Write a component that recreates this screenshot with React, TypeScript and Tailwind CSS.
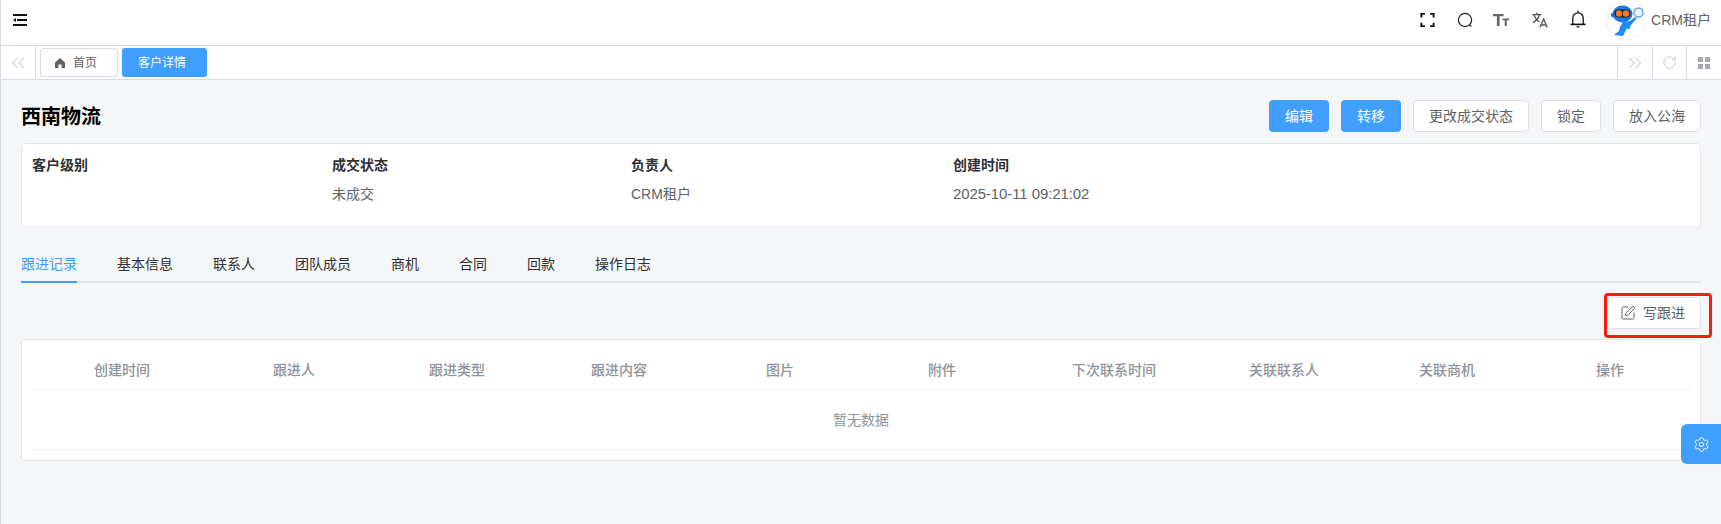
import { ChevronsLeft, ChevronsRight, RotateCw, Settings, SquarePen } from "lucide-react";

const font = "font-['Liberation_Sans','Noto_Sans_CJK_SC',sans-serif]";

const tabs = [
  { label: "跟进记录", active: true },
  { label: "基本信息" },
  { label: "联系人" },
  { label: "团队成员" },
  { label: "商机" },
  { label: "合同" },
  { label: "回款" },
  { label: "操作日志" },
];

const columns = ["创建时间", "跟进人", "跟进类型", "跟进内容", "图片", "附件", "下次联系时间", "关联联系人", "关联商机", "操作"];

function Avatar() {
  return (
    <svg viewBox="0 0 40 40" className="h-10 w-10">
      <circle cx="20" cy="20" r="19.5" fill="#ffffff" stroke="#f2f2f2" />
      <circle cx="32.5" cy="12.5" r="4.5" fill="#eef6fe" stroke="#5aa5ee" strokeWidth="1.3" />
      <path d="M17 22 L24 21 L29 17 L30.5 18.5 L25 25 L23 30 L21 28 L17 36 L8 35 L13 31 L14 27 Z" fill="#1f8cf0" />
      <circle cx="7" cy="15" r="2.2" fill="#1a73de" />
      <ellipse cx="16.5" cy="14" rx="10" ry="8.5" fill="#1a78e2" />
      <rect x="8.5" y="9.5" width="16" height="8" rx="4" fill="#1c2430" />
      <circle cx="13" cy="13.5" r="3.2" fill="#f07a1c" />
      <circle cx="20" cy="13.5" r="3.2" fill="#f07a1c" />
    </svg>
  );
}

export default function App() {
  return (
    <div className={`${font} relative h-[524px] w-[1721px] overflow-hidden border-l border-[#d8dce5] bg-[#f5f6f8] text-sm text-[#606266]`}>
      {/* Top Nav */}
      <div className="flex h-[46px] items-center border-b border-[#d8dce5] bg-white pb-[5px] pl-[12px] pr-[10px]">
        <svg viewBox="0 0 14 12" className="h-3 w-[14px] text-[#111]" fill="currentColor">
          <rect x="0" y="0" width="14" height="2" />
          <rect x="4" y="5" width="10" height="2" />
          <path d="M0 6 L3 4 L3 8 Z" />
          <rect x="0" y="10" width="14" height="2" />
        </svg>
        <div className="ml-auto flex items-center">
          <svg viewBox="0 0 16 16" className="h-[14px] w-[15px] text-[#111]" fill="none" stroke="currentColor" strokeWidth="2.2">
            <path d="M1 5V1h4M11 1h4v4M15 11v4h-4M5 15H1v-4" />
          </svg>
          <svg viewBox="0 0 16 16" className="ml-[22px] h-4 w-4 text-[#222]" fill="none" stroke="currentColor" strokeWidth="1.2">
            <circle cx="8" cy="8" r="6.6" />
            <path d="M12.6 12.8l1.8 1.8" />
          </svg>
          <svg viewBox="0 0 16 12" className="ml-5 h-3 w-4 text-[#666]" fill="currentColor">
            <path d="M0 0h10.5v2.2H6.6V12H3.9V2.2H0z" />
            <path d="M9.5 4.5H16v1.7h-2.2V12h-2.1V6.2H9.5z" />
          </svg>
          <svg viewBox="0 0 16 16" className="ml-[23px] h-4 w-4 text-[#555]" fill="none" stroke="currentColor" strokeWidth="1.3">
            <path d="M0.5 2.6h9M5 0.5v2.1M7.6 2.8C6.6 6 4 9 0.8 10.6M2 2.8C3 6 5 8.6 7.6 10" />
            <path d="M8 15.6L11.6 7l3.6 8.6M9.3 13h4.6" />
          </svg>
          <svg viewBox="0 0 16 18" className="-mt-[3px] ml-[22px] h-[18px] w-4 text-[#111]" fill="none" stroke="currentColor" strokeWidth="1.3">
            <path d="M8 0.5v2M2.8 14V8a5.2 5.2 0 0 1 10.4 0v6" />
            <path d="M0.5 14.4h15" strokeWidth="1.6" />
            <path d="M6.6 16.8h2.8" />
          </svg>
          <span className="ml-5"><Avatar /></span>
          <span className="ml-[5px] text-sm text-[#606266]">CRM租户</span>
        </div>
      </div>

      {/* Tags Bar */}
      <div className="flex h-[34px] items-stretch border-b border-[#d8dce5] bg-white">
        <div className="flex w-[35px] items-center justify-center border-r border-[#d8dce5] text-[#b4b4b4]">
          <ChevronsLeft className="h-[22px] w-[22px]" strokeWidth={1} />
        </div>
        <div className="flex items-center gap-1 pl-[4px]">
          <div className="flex h-[29px] w-[78px] items-center gap-2 rounded-[3px] border border-[#d8dce5] pl-[14px] text-xs text-[#606266]">
            <svg viewBox="0 0 10 10" className="h-[10px] w-[10px]" fill="#606266">
              <path d="M5 0 L10 4.6 V10 H6.6 V6.6 H3.4 V10 H0 V4.6 Z" />
            </svg>
            首页
          </div>
          <div className="flex h-[29px] w-[85px] items-center rounded-[3px] bg-[#409eff] pl-4 text-xs text-white">客户详情</div>
        </div>
        <div className="ml-auto flex">
          <div className="flex w-[35px] items-center justify-center border-l border-[#d8dce5] text-[#b4b4b4]">
            <ChevronsRight className="h-[22px] w-[22px]" strokeWidth={1} />
          </div>
          <div className="flex w-[34px] items-center justify-center border-l border-[#d8dce5] text-[#b4b4b4]">
            <RotateCw className="h-[15px] w-[15px]" strokeWidth={1.2} />
          </div>
          <div className="flex w-[35px] items-center justify-center border-l border-[#d8dce5]">
            <div className="grid grid-cols-2 gap-[2px]">
              <span className="h-[5px] w-[5px] bg-[#a5a8ae]" />
              <span className="h-[5px] w-[5px] bg-[#a5a8ae]" />
              <span className="h-[5px] w-[5px] bg-[#a5a8ae]" />
              <span className="h-[5px] w-[5px] bg-[#a5a8ae]" />
            </div>
          </div>
        </div>
      </div>

      {/* Main */}
      <div className="px-5">
        {/* Title & Actions */}
        <div className="mt-5 flex h-8 items-center justify-between">
          <h1 className="pt-px text-xl font-bold text-black">西南物流</h1>
          <div className="flex gap-3">
            <button className="h-8 w-[60px] rounded-[4px] bg-[#409eff] text-white">编辑</button>
            <button className="h-8 w-[60px] rounded-[4px] bg-[#409eff] text-white">转移</button>
            <button className="h-8 w-[116px] rounded-[4px] border border-[#dcdfe6] bg-white">更改成交状态</button>
            <button className="h-8 w-[60px] rounded-[4px] border border-[#dcdfe6] bg-white">锁定</button>
            <button className="h-8 w-[88px] rounded-[4px] border border-[#dcdfe6] bg-white">放入公海</button>
          </div>
        </div>

        {/* Summary */}
        <div className="mt-[11px] flex h-[85px] rounded-[4px] border border-[#e4e7ed] bg-white pl-[10px] pt-[11px]">
          <div className="w-[300px]">
            <div className="font-bold text-[#303133]">客户级别</div>
          </div>
          <div className="w-[299px]">
            <div className="font-bold text-[#303133]">成交状态</div>
            <div className="mt-[9px]">未成交</div>
          </div>
          <div className="w-[322px]">
            <div className="font-bold text-[#303133]">负责人</div>
            <div className="mt-[9px]">CRM租户</div>
          </div>
          <div>
            <div className="font-bold text-[#303133]">创建时间</div>
            <div className="mt-[9px] text-[15px] leading-5 tracking-[-0.1px]">2025-10-11 09:21:02</div>
          </div>
        </div>

        {/* Tabs */}
        <div className="mt-[19px] flex h-9 border-b-2 border-[#e4e7ed]">
          {tabs.map((tab) => (
            <div
              key={tab.label}
              className={
                tab.active
                  ? "-mb-[2px] mr-10 border-b-2 border-[#409eff] pt-[7px] text-[#409eff]"
                  : "mr-10 pt-[7px] text-[#303133]"
              }
            >
              {tab.label}
            </div>
          ))}
        </div>

        {/* Write Follow-up */}
        <div className="mt-[14px] flex justify-end">
          <div className="relative">
            <button className="flex h-8 w-[94px] items-center gap-[7px] rounded-[4px] border border-[#dcdfe6] bg-white pl-3">
              <SquarePen className="h-4 w-4" strokeWidth={1.5} />
              写跟进
            </button>
            <div className="absolute -left-[3px] -top-[4px] h-[45px] w-[108px] rounded-[4px] border-[3px] border-[#ff1a12]" />
          </div>
        </div>

        {/* Table */}
        <div className="mt-[10px] h-[122px] rounded-[4px] border border-[#e4e7ed] bg-white px-[10px] pt-[10px]">
          <div className="grid h-10 grid-cols-[180px_164px_162px_162px_160px_164px_180px_160px_166px_160px] items-center border-b border-[#ebeef5] text-center font-medium text-[#909399]">
            {columns.map((col) => (
              <div key={col}>{col}</div>
            ))}
          </div>
          <div className="flex h-[60px] items-center justify-center border-b border-[#ebeef5] text-[#909399]">暂无数据</div>
        </div>
      </div>

      {/* Floating Settings */}
      <div className="absolute right-0 top-[424px] flex h-10 w-10 items-center justify-center rounded-l-[6px] bg-[#409eff] text-white">
        <Settings className="h-[17px] w-[17px]" strokeWidth={1.3} />
      </div>
    </div>
  );
}
